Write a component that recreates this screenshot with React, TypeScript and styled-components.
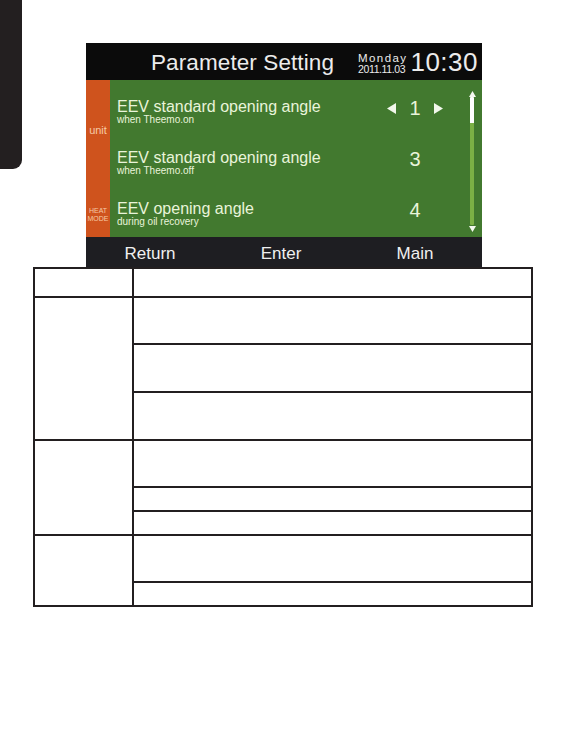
import React from 'react';
import styled, { createGlobalStyle } from 'styled-components';

const GlobalStyle = createGlobalStyle`
  html, body {
    margin: 0;
    padding: 0;
    background: #ffffff;
    font-family: "Liberation Sans", Arial, sans-serif;
  }
`;

const Page = styled.div`
  width: 567px;
  min-height: 737px;
  background: #ffffff;
`;

// MARK: top area with the page tab and the device screen
const TopArea = styled.div`
  display: flex;
  align-items: flex-start;
  height: 267px;
`;

const PageTab = styled.div`
  flex-shrink: 0;
  width: 22px;
  height: 169px;
  background: #231f20;
  border-bottom-right-radius: 9px;
`;

const Screen = styled.div`
  display: flex;
  flex-direction: column;
  width: 396px;
  height: 224px;
  margin-left: 64px;
  margin-top: 43px;
  overflow: hidden;
`;

const Header = styled.div`
  display: flex;
  align-items: center;
  height: 37px;
  padding: 0 4px 0 65px;
  background: #0b0b0b;
  color: #ececec;
`;

const Title = styled.div`
  margin-top: 3px;
  font-size: 22.5px;
  line-height: 1;
  letter-spacing: 0.1px;
`;

const DateBlock = styled.div`
  display: flex;
  flex-direction: column;
  margin-left: auto;
  margin-top: 2px;
`;

const Weekday = styled.span`
  font-size: 11.5px;
  line-height: 12px;
  letter-spacing: 1.4px;
`;

const DateText = styled.span`
  font-size: 10.5px;
  line-height: 10px;
  letter-spacing: -0.4px;
`;

const Clock = styled.div`
  margin-left: 3px;
  margin-top: 1px;
  font-size: 26px;
  line-height: 1;
  letter-spacing: 0.5px;
`;

const Body = styled.div`
  display: flex;
  height: 157px;
  background: #42792f;
`;

const Side = styled.div`
  display: flex;
  flex-direction: column;
  align-items: center;
  flex-shrink: 0;
  width: 24px;
  padding: 45px 0 14px;
  box-sizing: border-box;
  background: #cf531d;
  color: #f6caa6;
  text-align: center;
`;

const SideLabel = styled.span<{ $small?: boolean }>`
  font-size: ${p => (p.$small ? '7px' : '11px')};
  line-height: ${p => (p.$small ? '8px' : '11px')};
  margin-top: ${p => (p.$small ? 'auto' : '0')};
`;

const Rows = styled.div`
  display: flex;
  flex-direction: column;
  flex: 1;
  padding: 6px 12px 0 7px;
  overflow: hidden;
`;

const Row = styled.div`
  display: flex;
  align-items: center;
  flex-shrink: 0;
  height: 51px;
  color: #e9f4da;
`;

const Label = styled.div`
  display: flex;
  flex-direction: column;
  flex: 1;
`;

const RowTitle = styled.span`
  font-size: 16px;
  line-height: 16px;
`;

const RowSub = styled.span`
  font-size: 10px;
  line-height: 9px;
`;

const ValueCell = styled.div`
  display: flex;
  align-items: center;
  justify-content: space-between;
  width: 70px;
  padding: 0 7px 7px;
  box-sizing: border-box;
`;

const Value = styled.span`
  flex: 1;
  font-size: 20px;
  line-height: 1;
  text-align: center;
`;

const ArrowSlot = styled.span`
  display: flex;
  width: 9px;
  height: 11px;
`;

const ScrollColumn = styled.div`
  display: flex;
  flex-direction: column;
  align-items: center;
  flex-shrink: 0;
  width: 20px;
  padding: 11px 0 5px;
  box-sizing: border-box;
`;

const Track = styled.div`
  flex: 1;
  width: 4px;
  margin: 0 0 1px;
  background: #7bb045;
  border-radius: 1px;
  overflow: hidden;
`;

const Thumb = styled.div`
  height: 26px;
  background: #ffffff;
`;

const Footer = styled.div`
  display: grid;
  grid-template-columns: 128px 134px 134px;
  align-items: center;
  height: 30px;
  padding-top: 3px;
  box-sizing: border-box;
  background: #1e1e22;
  color: #f0f0f0;
`;

const FooterItem = styled.span`
  font-size: 17px;
  text-align: center;
`;

// MARK: table under the screen
const Table = styled.div`
  display: grid;
  grid-template-columns: 97px 1fr;
  grid-template-rows: 27px 45px 46px 46px 45px 22px 22px 45px 22px;
  gap: 2px;
  width: 500px;
  margin-left: 33px;
  border: 2px solid #231f20;
  box-sizing: border-box;
  background: #231f20;
`;

const Cell = styled.div<{ $span?: number }>`
  background: #ffffff;
  grid-row: ${p => (p.$span ? `span ${p.$span}` : 'auto')};
`;

const Triangle = ({ dir }: { dir: 'left' | 'right' }) => (
  <svg width="9" height="11" viewBox="0 0 9 11">
    <path d={dir === 'left' ? 'M9 0 L9 11 L0 5.5 Z' : 'M0 0 L0 11 L9 5.5 Z'} fill="#f2f7ec" />
  </svg>
);

const SmallArrow = ({ up }: { up?: boolean }) => (
  <svg width="7" height="6" viewBox="0 0 7 6">
    <path d={up ? 'M3.5 0 L7 6 L0 6 Z' : 'M0 0 L7 0 L3.5 6 Z'} fill="#f4f8ef" />
  </svg>
);

const rows = [
  { title: 'EEV standard opening angle', sub: 'when Theemo.on', value: '1', arrows: true },
  { title: 'EEV standard opening angle', sub: 'when Theemo.off', value: '3', arrows: false },
  { title: 'EEV opening angle', sub: 'during oil recovery', value: '4', arrows: false },
];

// left column groups: how many sub rows each one covers
const groups = [3, 3, 2];

export default function App(): JSX.Element {
  return (
    <Page>
      <GlobalStyle />
      <TopArea>
        <PageTab />
        <Screen>
          <Header>
            <Title>Parameter Setting</Title>
            <DateBlock>
              <Weekday>Monday</Weekday>
              <DateText>2011.11.03</DateText>
            </DateBlock>
            <Clock>10:30</Clock>
          </Header>
          <Body>
            <Side>
              <SideLabel>unit</SideLabel>
              <SideLabel $small>HEAT<br />MODE</SideLabel>
            </Side>
            <Rows>
              {rows.map((r, i) => (
                <Row key={i}>
                  <Label>
                    <RowTitle>{r.title}</RowTitle>
                    <RowSub>{r.sub}</RowSub>
                  </Label>
                  <ValueCell>
                    <ArrowSlot>{r.arrows && <Triangle dir="left" />}</ArrowSlot>
                    <Value>{r.value}</Value>
                    <ArrowSlot>{r.arrows && <Triangle dir="right" />}</ArrowSlot>
                  </ValueCell>
                </Row>
              ))}
            </Rows>
            <ScrollColumn>
              <SmallArrow up />
              <Track>
                <Thumb />
              </Track>
              <SmallArrow />
            </ScrollColumn>
          </Body>
          <Footer>
            <FooterItem>Return</FooterItem>
            <FooterItem>Enter</FooterItem>
            <FooterItem>Main</FooterItem>
          </Footer>
        </Screen>
      </TopArea>
      <Table>
        <Cell />
        <Cell />
        {groups.map((n, g) => (
          <React.Fragment key={g}>
            <Cell $span={n} />
            {Array.from({ length: n }).map((_, k) => (
              <Cell key={k} />
            ))}
          </React.Fragment>
        ))}
      </Table>
    </Page>
  );
}
